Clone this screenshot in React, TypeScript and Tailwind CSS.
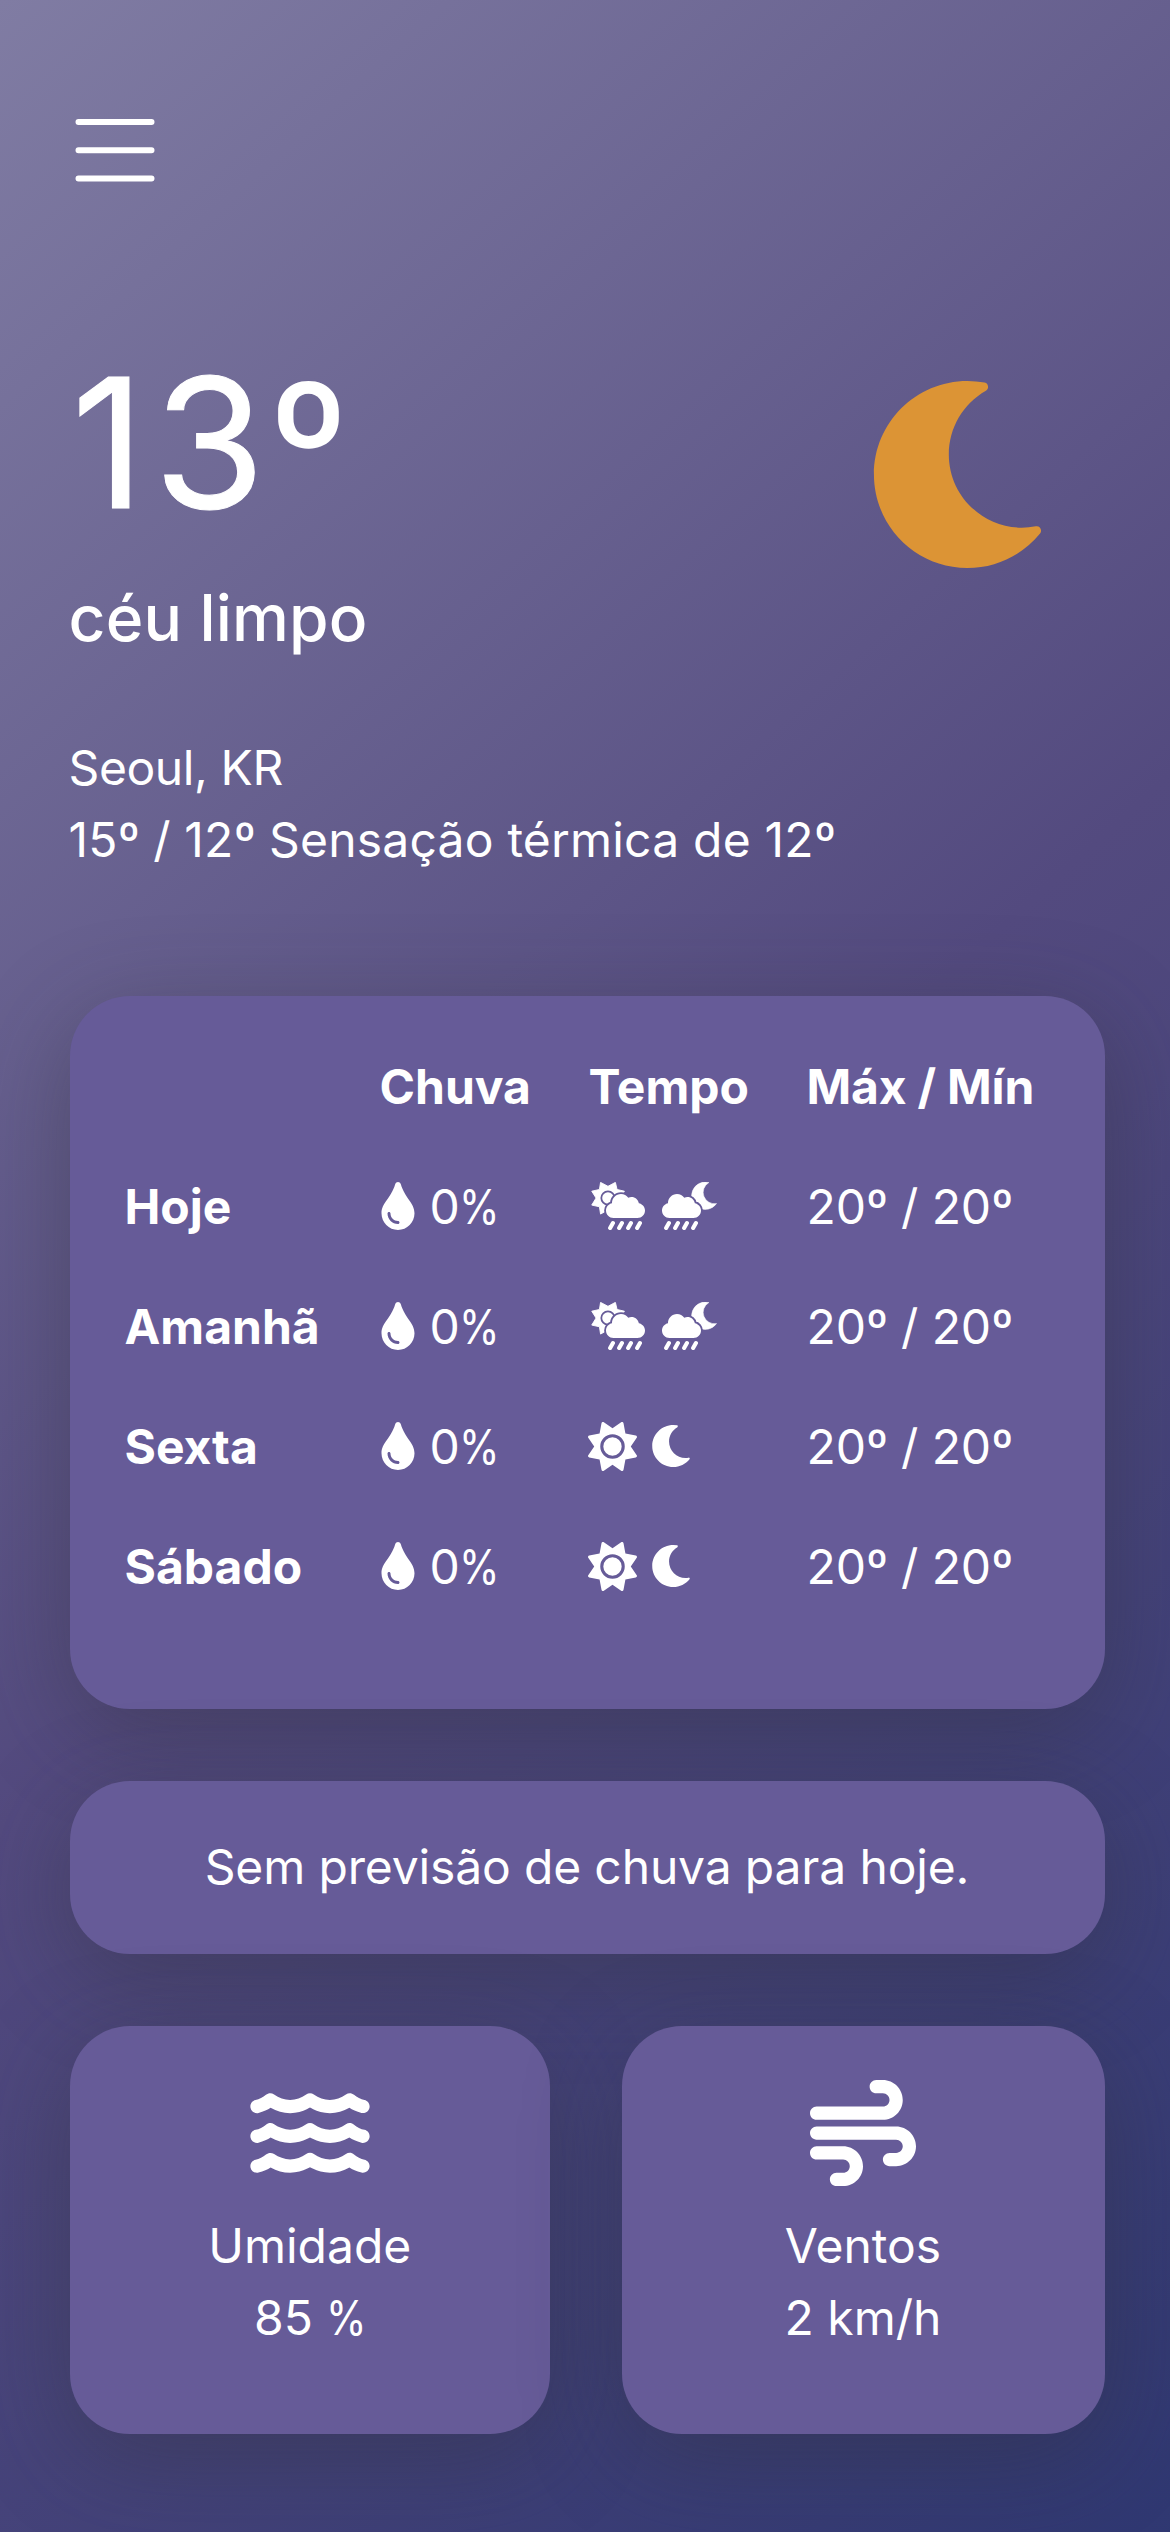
import type { ReactNode } from "react";
import { FaTint, FaMoon } from "react-icons/fa";
import { FaSun, FaWater, FaWind } from "react-icons/fa6";

type Day = { name: string; rainy: boolean };

const days: Day[] = [
  { name: "Hoje", rainy: true },
  { name: "Amanhã", rainy: true },
  { name: "Sexta", rainy: false },
  { name: "Sábado", rainy: false },
];

const columns = "grid grid-cols-[255px_209px_218px_1fr] h-[120px] items-center";

function Panel({ className, children }: { className: string; children: ReactNode }) {
  return (
    <section
      className={`rounded-[60px] bg-[#665b98] shadow-[0_24px_96px_rgba(48,48,52,0.38)] ${className}`}
    >
      {children}
    </section>
  );
}

function Percent() {
  return <span className="inline-block w-[33px] origin-left scale-x-[0.86]">%</span>;
}

function Degree() {
  return <span className="tracking-[-0.8px] font-semibold">º</span>;
}

/* Cloud with four drops; its outline in the panel colour separates it from the sun or moon behind. */
function RainCloud() {
  return (
    <>
      <path
        fill="#fff"
        stroke="#665b98"
        strokeWidth="40"
        paintOrder="stroke"
        d="M350.5 225.5c-6.9-37.2-39.3-65.5-78.5-65.5-12.3 0-23.9 3-34.3 8-17.4-24.1-45.6-40-77.7-40-53 0-96 43-96 96 0 .5.2 1.1.2 1.6C27.6 233 0 265.2 0 304c0 44.2 35.8 80 80 80h256c44.2 0 80-35.8 80-80 0-39.2-28.2-71.7-65.5-78.5z"
      />
      <path
        fill="none"
        stroke="#fff"
        strokeWidth="44"
        strokeLinecap="round"
        d="M74 438l-30 52M170 438l-30 52M266 438l-30 52M362 438l-30 52"
      />
    </>
  );
}

function SunRain() {
  return (
    <svg viewBox="0 0 576 512" className="ml-[2px] h-[48px] w-[54px]">
      <path
        fill="#fff"
        stroke="#fff"
        strokeWidth="10"
        strokeLinejoin="round"
        d="M102 4L181 46L260 4L278 80L356 98L312 171L356 246L278 264L260 342L181 298L102 342L90 264L8 246L54 171L8 98L90 80Z"
      />
      <circle cx="181" cy="171" r="71" fill="#fff" stroke="#665b98" strokeWidth="19" />
      <g transform="translate(160 0)">
        <RainCloud />
      </g>
    </svg>
  );
}

function MoonRain() {
  return (
    <svg viewBox="0 0 592 512" className="h-[48px] w-[55.5px]">
      <path
        fill="#fff"
        stroke="#fff"
        strokeWidth="6"
        strokeLinejoin="round"
        d="M500 6A146 146 0 1 0 582 230A121 121 0 0 1 500 6Z"
      />
      <RainCloud />
    </svg>
  );
}

function ForecastRow({ day }: { day: Day }) {
  return (
    <div className={columns}>
      <div className="font-bold">{day.name}</div>
      <div className="flex items-center">
        <FaTint className="-mt-[2px] h-[48px] w-[36px]" />
        <span className="ml-[14px] tracking-[-1px]">
          0<Percent />
        </span>
      </div>
      <div className="-mt-[2px] flex items-center">
        {day.rainy ? (
          <div className="flex gap-[17px]">
            <SunRain />
            <MoonRain />
          </div>
        ) : (
          <div className="flex items-center gap-[13.5px]">
            <FaSun className="-ml-[1px] h-[49px] w-[49px]" />
            <FaMoon className="h-[42px] w-[42px]" />
          </div>
        )}
      </div>
      <div className="tracking-[-0.1px]">
        20
        <Degree /> / 20
        <Degree />
      </div>
    </div>
  );
}

export default function App() {
  return (
    <main className="h-[2532px] w-[1170px] overflow-hidden bg-[linear-gradient(138deg,#807ca3_0%,#534a7f_51%,#2e3771_102%)] pr-[65.5px] pl-[69.5px] font-['Inter',sans-serif] text-[48px] leading-[72px] text-white">
      <button type="button" aria-label="Menu" className="mt-[101px] -ml-[4px] block h-[98px] w-[98px]">
        <svg
          viewBox="0 0 98 98"
          fill="none"
          stroke="currentColor"
          strokeWidth="6"
          strokeLinecap="round"
          className="h-full w-full"
        >
          <path d="M12.5 21h73M12.5 49.2h73M12.5 77.4h73" />
        </svg>
      </button>

      <header className="mt-[123px] flex h-[296px] justify-between">
        <div>
          <h1 className="mt-px ml-[2px] text-[180px] leading-[240px] font-normal [-webkit-text-stroke:1px_#fff]">
            <span className="tracking-[9px]">1</span>
            <span className="tracking-[2px]">3</span>
            <span className="text-[176px] leading-none font-semibold [-webkit-text-stroke:0px]">º</span>
          </h1>
          <p className="mt-[7px] -ml-[1px] text-[64px] leading-[96px] font-medium tracking-[0.2px]">
            céu limpo
          </p>
        </div>
        <FaMoon className="mt-[59px] mr-[54px] h-[187px] w-[187px] text-[#dc9435]" />
      </header>

      <div className="mt-[114px] -ml-[1px]">
        <p className="tracking-[-0.4px]">Seoul, KR</p>
        <p className="tracking-[0.2px]">
          15
          <Degree /> / 12
          <Degree /> Sensação térmica de 12
          <Degree />
        </p>
      </div>

      <Panel className="mt-[120px] h-[712.5px] px-[55px] pt-[31px]">
        <div className={`${columns} font-bold`}>
          <div />
          <div>Chuva</div>
          <div>Tempo</div>
          <div className="tracking-[-0.2px]">Máx / Mín</div>
        </div>
        {days.map((day) => (
          <ForecastRow key={day.name} day={day} />
        ))}
      </Panel>

      <Panel className="mt-[72px] flex h-[173px] items-center justify-center">
        <p className="tracking-[-0.15px]">Sem previsão de chuva para hoje.</p>
      </Panel>

      <div className="mt-[72px] grid grid-cols-[480.5px_483px] justify-between">
        <Panel className="flex h-[408px] flex-col items-center pt-[54px] text-center">
          <FaWater className="h-[106px] w-[120px]" />
          <p className="mt-[24px]">Umidade</p>
          <p className="mr-[6px]">
            85 <Percent />
          </p>
        </Panel>
        <Panel className="flex h-[408px] flex-col items-center pt-[54px] text-center">
          <FaWind className="h-[106px] w-[106px]" />
          <p className="mt-[24px]">Ventos</p>
          <p>2 km/h</p>
        </Panel>
      </div>
    </main>
  );
}
